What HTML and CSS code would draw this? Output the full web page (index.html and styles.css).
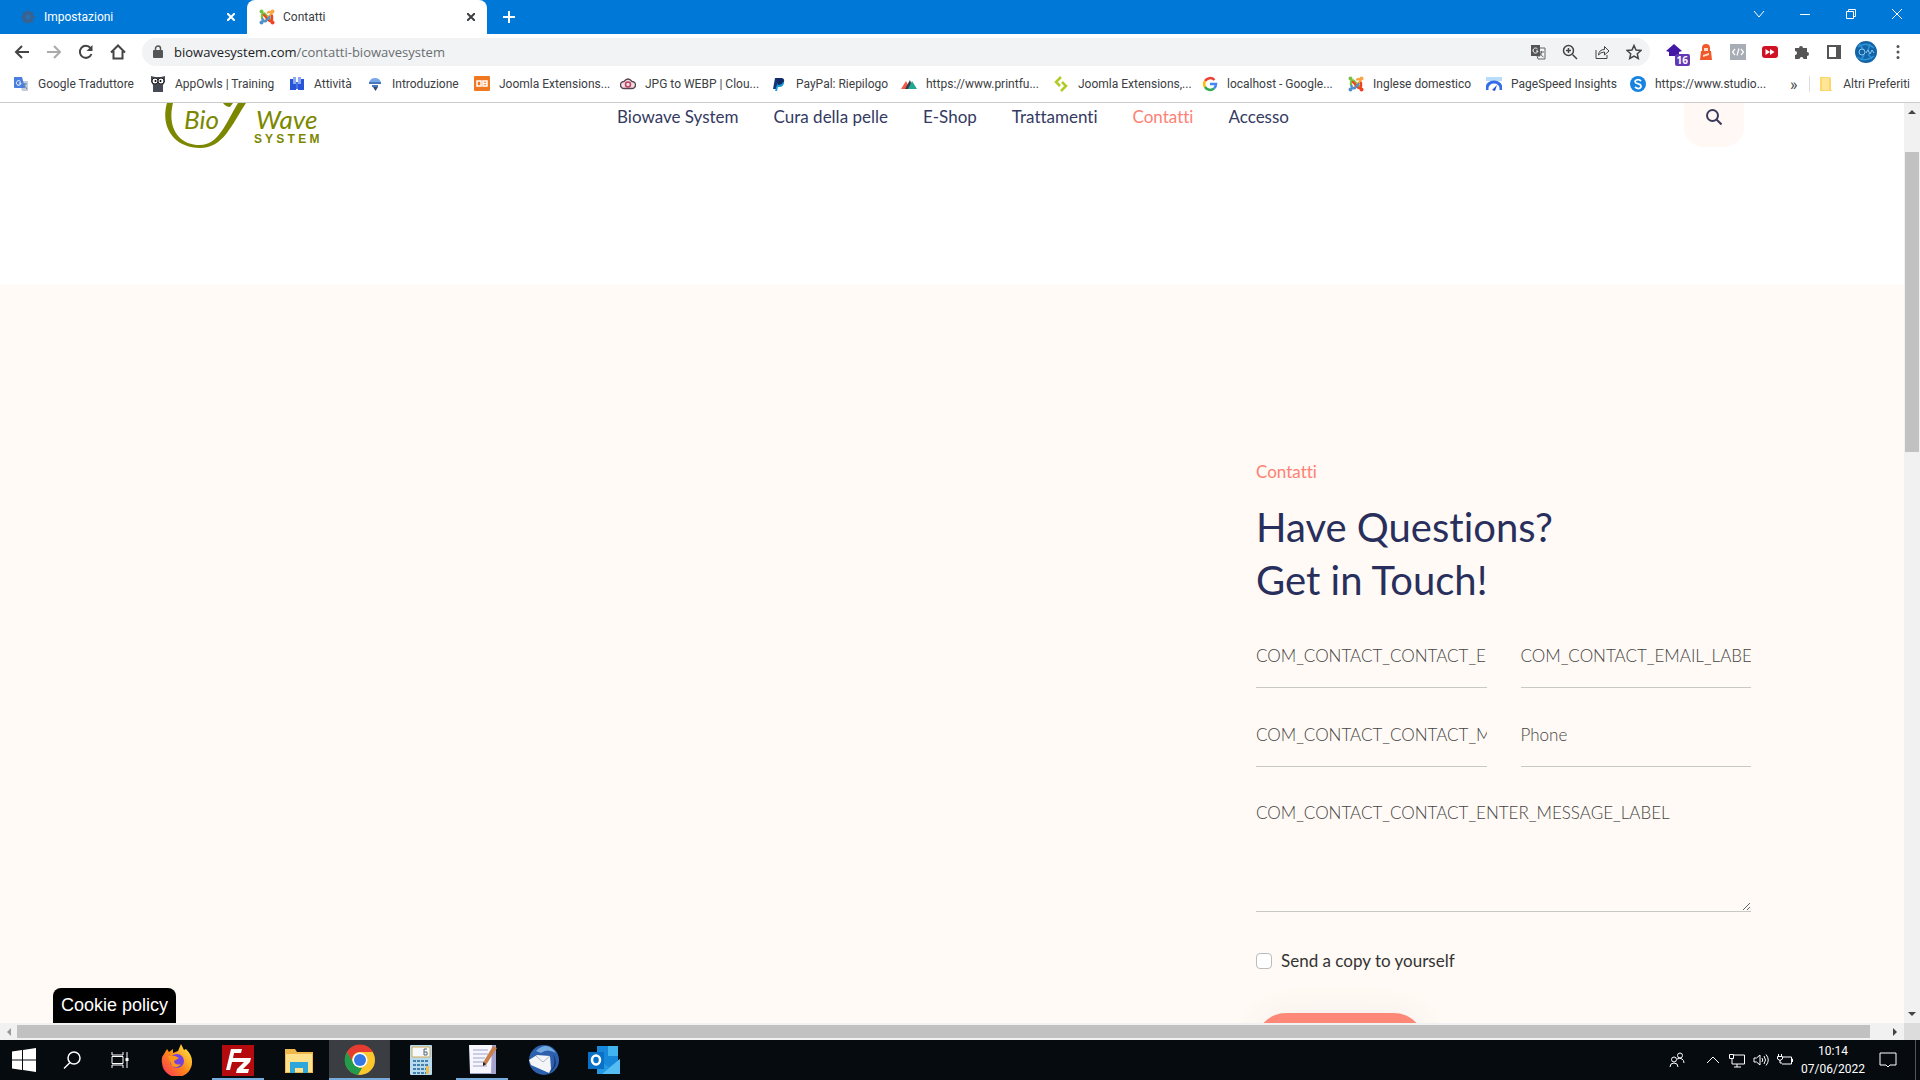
FILE: index.html
```html
<!DOCTYPE html>
<html lang="it">

<head>
    <meta charset="UTF-8">
    <meta name="viewport" content="width=device-width, initial-scale=1.0">
    <title>Contatti</title>
    <link rel="stylesheet" href="styles.css">
</head>

<body>
    <svg class="symbols" aria-hidden="true">
        <symbol id="joomla" viewBox="0 0 16 16">
            <g fill="none" stroke-width="2.4" stroke-linecap="round">
                <path d="M3 9V6.500Q3 4 5.500 4.500L11 10" stroke="#7ac143"/>
                <path d="M9 3.500Q12 2 12.500 5L6.500 11" stroke="#f9a541"/>
                <path d="M13 7V10.500Q12 13 10 11.500L5 6" stroke="#f44321"/>
                <path d="M3.500 10Q4 13 7 12L10.500 8" stroke="#5091cd"/>
            </g>
            <circle cx="2.500" cy="2.500" r="2" fill="#7ac143"/>
            <circle cx="13.500" cy="2.500" r="2" fill="#f9a541"/>
            <circle cx="13.500" cy="13.500" r="2" fill="#f44321"/>
            <circle cx="2.500" cy="13.500" r="2" fill="#5091cd"/>
        </symbol>
    </svg>

    <div class="tabs">
        <div class="tab">
            <svg class="icon" viewBox="0 0 16 16"><circle cx="8" cy="8" r="4" fill="none" stroke="#3c618c" stroke-width="3"/><path d="M8 1v14M1 8h14M3 3l10 10M13 3L3 13" stroke="#3c618c" stroke-width="2"/><circle cx="8" cy="8" r="2.500" fill="#2a6fb4"/></svg>
            <span class="tab-title">Impostazioni</span>
            <button class="tab-close" aria-label="Chiudi"><svg viewBox="0 0 8 8"><path d="M0 0l8 8M8 0L0 8"/></svg></button>
        </div>
        <div class="tab active">
            <svg class="icon"><use href="#joomla"/></svg>
            <span class="tab-title">Contatti</span>
            <button class="tab-close" aria-label="Chiudi"><svg viewBox="0 0 8 8"><path d="M0 0l8 8M8 0L0 8"/></svg></button>
        </div>
        <button class="new-tab" aria-label="Nuova scheda"><svg viewBox="0 0 12 12"><path d="M6 0v12M0 6h12"/></svg></button>
        <div class="window-buttons">
            <button aria-label="Cerca schede"><svg viewBox="0 0 12 12"><path d="M1 3l5 6 5-6"/></svg></button>
            <button aria-label="Riduci"><svg viewBox="0 0 12 12"><path d="M1 6.500h10"/></svg></button>
            <button aria-label="Ripristina"><svg viewBox="0 0 12 12"><path d="M1.500 3.500h7v7h-7zM3.500 3.500v-2h7v7h-2"/></svg></button>
            <button aria-label="Chiudi"><svg viewBox="0 0 12 12"><path d="M1 1l10 10M11 1L1 11"/></svg></button>
        </div>
    </div>

    <div class="toolbar">
        <button class="tool" aria-label="Indietro"><svg class="line" viewBox="0 0 16 16"><path d="M15 8H2M8 2L2 8l6 6"/></svg></button>
        <button class="tool off" aria-label="Avanti"><svg class="line" viewBox="0 0 16 16"><path d="M1 8h13M8 2l6 6-6 6"/></svg></button>
        <button class="tool" aria-label="Ricarica"><svg class="line" viewBox="0 0 16 16"><path d="M13.500 10A6 6 0 1 1 12.500 4"/><path d="M14.500 1v6h-6z" fill="#444" stroke="none"/></svg></button>
        <button class="tool" aria-label="Home"><svg class="line" viewBox="0 0 16 16"><path d="M1 8.500L8 1.500l7 7M3.500 7v7.500h9V7"/></svg></button>
        <div class="omnibox">
            <svg class="lock" viewBox="0 0 10 14"><path d="M2.500 6V3.500a2.500 2.500 0 0 1 5 0V6" fill="none" stroke="#555" stroke-width="1.500"/><rect y="5" width="10" height="8" rx="1" fill="#555"/></svg>
            <span class="url">biowavesystem.com<span>/contatti-biowavesystem</span></span>
            <button class="tool" aria-label="Traduci"><svg viewBox="0 0 16 16"><rect x="1" y="1" width="9" height="11" fill="#555"/><path d="M7.500 5A2.500 2.500 0 1 0 8 7H6" fill="none" stroke="#fff"/><path d="M10 4h5v11H8l-1-3" fill="none" stroke="#666"/><path d="M9 8h5M11.500 7v1q0 3-3 5M10 9q1 3 3.500 4" fill="none" stroke="#666"/></svg></button>
            <button class="tool" aria-label="Zoom"><svg class="line" viewBox="0 0 16 16"><circle cx="6.500" cy="6.500" r="5"/><path d="M10.500 10.500l4.500 4.500M6.500 4v5M4 6.500h5"/></svg></button>
            <button class="tool" aria-label="Condividi"><svg class="line thin" viewBox="0 0 16 16"><path d="M2 6v8.500h11V11M4.500 11Q5 5.500 10.500 5.500V2.500L15 7l-4.500 4V8Q6.500 8 4.500 11z"/></svg></button>
            <button class="tool" aria-label="Preferiti"><svg class="line" viewBox="0 0 16 16"><path d="M8 1.500l2 4.500 5 .5-3.700 3.300 1 4.700L8 12l-4.300 2.500 1-4.700L1 6.500 6 6z"/></svg></button>
        </div>
        <button class="tool ext" aria-label="Estensione"><svg viewBox="0 0 16 16"><path d="M8 0l8 7-3 1v4H3V8L0 7z" fill="#4316a5"/></svg><span class="badge">16</span></button>
        <button class="tool" aria-label="Lighthouse"><svg viewBox="0 0 16 16"><path d="M4 4q0-4 4-4t4 4v3h1l1 9H2l1-9h1z" fill="#f0592b"/><path d="M6 4h4v3H6zM5 11l6-2v2l-6 2z" fill="#ffe0c8"/></svg></button>
        <button class="tool" aria-label="Codice"><svg viewBox="0 0 16 16"><rect width="16" height="16" fill="#a6adb5"/><path d="M5 5L2.500 8 5 11M11 5l2.500 3-2.500 3M9 4.500L7 11.500" fill="none" stroke="#fff" stroke-width="1.200"/></svg></button>
        <button class="tool" aria-label="Video"><svg viewBox="0 0 16 16"><rect y="2" width="16" height="12" rx="3" fill="#cf1225"/><path d="M3.500 5l4.500 3-4.500 3zM8 5l4.500 3L8 11z" fill="#fff"/></svg></button>
        <button class="tool" aria-label="Estensioni"><svg viewBox="0 0 16 16"><path d="M1 4h4a2 2 0 1 1 4 0h4v4a2 2 0 1 1 0 4v3H9.500a2 2 0 0 0-4 0H1v-4a2 2 0 0 0 0-4z" fill="#555"/></svg></button>
        <button class="tool" aria-label="Pannello laterale"><svg viewBox="0 0 16 16"><path d="M2 2h12v12H2z" fill="none" stroke="#555" stroke-width="2"/><path d="M10 2h5v12h-5z" fill="#555"/></svg></button>
        <button class="tool" aria-label="Profilo"><svg class="avatar" viewBox="0 0 22 22"><circle cx="11" cy="11" r="11" fill="#1264a8"/><path d="M3 6q8-6 16 1M2 16q8 6 17-1M4 3l4 5M15 3l-2 6M6 19l3-5M17 18l-4-5" fill="none" stroke="#2f93d4" stroke-width="1.500"/><circle cx="7" cy="11" r="3" fill="none" stroke="#8ccaf0"/><path d="M11 12l2-3 2 4 2-4 2 3" fill="none" stroke="#8ccaf0"/></svg></button>
        <button class="tool" aria-label="Menu"><svg viewBox="0 0 16 16" fill="#555"><circle cx="8" cy="2.500" r="1.500"/><circle cx="8" cy="8" r="1.500"/><circle cx="8" cy="13.500" r="1.500"/></svg></button>
    </div>

    <nav class="bookmarks">
        <a href="#"><svg class="icon" viewBox="0 0 16 16"><path d="M6 5h9v10H9z" fill="#c5cdd8"/><path d="M1 1h8l3 11H2q-1 0-1-1z" fill="#4a7fe0"/><path d="M7.500 5.500A2.300 2.300 0 1 0 8 7H6" fill="none" stroke="#fff"/><path d="M10 8h4M12 7q0 4-2 5M11 9l3 4" fill="none" stroke="#5b84b8"/></svg>Google Traduttore</a>
        <a href="#"><svg class="icon" viewBox="0 0 16 16"><path d="M1 0l4 1h6l4-1v6l-2 3v7H3V9L1 6z" fill="#454a55"/><circle cx="5" cy="5" r="3" fill="#fff" stroke="#222"/><circle cx="11" cy="5" r="3" fill="#fff" stroke="#222"/><circle cx="5.500" cy="5" r="1"/><circle cx="10.500" cy="5" r="1"/></svg>AppOwls | Training</a>
        <a href="#"><svg class="icon" viewBox="0 0 16 16"><path d="M1 3h6v11H1zM9 3h6v11H9z" fill="#2854d8"/><path d="M4 1h3v7H4zM9 1h3v7H9z" fill="#8baaf2"/><path d="M7 6h2v7H7z" fill="#4972e4"/></svg>Attività</a>
        <a href="#"><svg class="icon" viewBox="0 0 16 16"><path d="M2 7q1-5 6-5t6 5z" fill="#78a8e8"/><path d="M2 7h12M5 10h6" stroke="#4a77b8" stroke-width="2"/><path d="M6 11h5l-2.500 4z" fill="#344a70"/></svg>Introduzione</a>
        <a href="#"><svg class="icon" viewBox="0 0 16 16"><rect width="16" height="15" rx="1" fill="#f07820"/><path d="M3 5h4v5H3zM9 5h4v5H9zM9 7.500h4" fill="none" stroke="#fff" stroke-width="1.500"/></svg>Joomla Extensions...</a>
        <a href="#"><svg class="icon" viewBox="0 0 16 16"><path d="M4 12.500a3.500 3.500 0 0 1 0-7q4-5 8 0a3.500 3.500 0 0 1 0 7z" fill="#f5dce2" stroke="#554450" stroke-width="1.300"/><circle cx="8" cy="8.500" r="2.500" fill="none" stroke="#b94261" stroke-width="1.500"/></svg>JPG to WEBP | Clou...</a>
        <a href="#"><svg class="icon" viewBox="0 0 16 16"><path d="M4 2h6q4 0 3 4t-5 4H6l-1 3H2z" fill="#17357d"/><path d="M7 6h6q0 5-5 5H7l-1 4H4z" fill="#199bd7"/><path d="M5 2h5q3 1 2 4T7 9z" fill="#112b67"/></svg>PayPal: Riepilogo</a>
        <a href="#"><svg class="icon" viewBox="0 0 16 16"><path d="M0 13l5-8 4 8z" fill="#f15b49"/><path d="M4 13l5-9 3 9z" fill="#333c46"/><path d="M7 13l4-8 5 8z" fill="#20a795"/></svg>https://www.printfu...</a>
        <a href="#"><svg class="icon" viewBox="0 0 16 16"><path d="M8 1L3 6l4 4M8 15l5-5-4-4" fill="none" stroke="#b4ca24" stroke-width="2.500"/></svg>Joomla Extensions,...</a>
        <a href="#"><svg class="icon" viewBox="0 0 16 16" fill="none" stroke-width="2.500"><path d="M12.500 4A6 6 0 0 0 3 5" stroke="#ea4335"/><path d="M3 5a6 6 0 0 0 0 6" stroke="#fbbc05"/><path d="M3 11a6 6 0 0 0 9 1.500" stroke="#34a853"/><path d="M8 8h6q0 3-2 4.500" stroke="#4285f4"/></svg>localhost - Google...</a>
        <a href="#"><svg class="icon"><use href="#joomla"/></svg>Inglese domestico</a>
        <a href="#"><svg class="icon" viewBox="0 0 16 16"><path d="M0 1h16v4H0z" fill="#b9dcfa"/><path d="M1 14V12a7 6 0 0 1 14 0v2" fill="none" stroke="#356ce8" stroke-width="3"/><path d="M6 14l5-5-2 6z" fill="#284fd0"/></svg>PageSpeed Insights</a>
        <a href="#"><svg class="icon" viewBox="0 0 16 16"><circle cx="8" cy="8" r="8" fill="#1683e2"/><path d="M11 5Q9 3 6.500 4T6 7l4 1.500q2 2 0 3.500t-5-1" fill="none" stroke="#fff" stroke-width="1.800"/></svg>https://www.studio...</a>
        <button class="more" aria-label="Altri">»</button>
        <a href="#" class="others"><svg class="icon" viewBox="0 0 16 16"><path d="M2 1h9q2 0 2 2v10l1 2H2z" fill="#fbd66d"/><path d="M4 2h7v12H4z" fill="#ffe596"/></svg>Altri Preferiti</a>
    </nav>

    <div class="viewport">
        <div class="page">
            <header class="header">
                <a href="#" class="logo" aria-label="Bio Wave System">
                    <svg viewBox="0 0 168 46">
                        <path d="M3 0C-4 24 10 45 36 45C59 45 67 23 82 0H74C61 22 54 42 36 42C14 42 3 24 9 0z" fill="#7c8700"/>
                        <path d="M59 0h10l-3 4q-4 0-7-4z" fill="#7c8700"/>
                        <text x="20" y="26" class="logo-script">Bio</text>
                        <text x="92" y="26" class="logo-script">Wave</text>
                        <text x="90" y="40" class="logo-system">S Y S T E M</text>
                    </svg>
                </a>
                <nav class="menu">
                    <a href="#">Biowave System</a>
                    <a href="#">Cura della pelle</a>
                    <a href="#">E-Shop</a>
                    <a href="#">Trattamenti</a>
                    <a href="#" class="current">Contatti</a>
                    <a href="#">Accesso</a>
                </nav>
                <button class="search" aria-label="Cerca"><svg viewBox="0 0 16 16"><circle cx="6.500" cy="6.500" r="5.500"/><path d="M10.500 10.500l5 5"/></svg></button>
            </header>

            <main class="contact">
                <form class="contact-form">
                    <p class="subtitle">Contatti</p>
                    <h2>Have Questions?<br>Get in Touch!</h2>
                    <div class="fields">
                        <input type="text" aria-label="Name" placeholder="COM_CONTACT_CONTACT_ENTER_NAME_LABEL">
                        <input type="email" aria-label="Email" placeholder="COM_CONTACT_EMAIL_LABEL">
                        <input type="text" aria-label="Subject" placeholder="COM_CONTACT_CONTACT_MESSAGE_SUBJECT_LABEL">
                        <input type="tel" aria-label="Phone" placeholder="Phone">
                        <textarea aria-label="Message" placeholder="COM_CONTACT_CONTACT_ENTER_MESSAGE_LABEL"></textarea>
                    </div>
                    <div class="copy">
                        <input type="checkbox" id="copy">
                        <label for="copy">Send a copy to yourself</label>
                    </div>
                    <button class="send" type="button" aria-label="Send"></button>
                </form>
            </main>
            <button class="cookie">Cookie policy</button>
        </div>
        <div class="scroll-y">
            <svg viewBox="0 0 8 5"><path d="M0 5l4-4 4 4z"/></svg>
            <div class="thumb-y"></div>
            <svg viewBox="0 0 8 5"><path d="M0 0l4 4 4-4z"/></svg>
        </div>
        <div class="scroll-x">
            <svg viewBox="0 0 5 8" class="dim"><path d="M5 0L1 4l4 4z"/></svg>
            <div class="thumb-x"></div>
            <svg viewBox="0 0 5 8"><path d="M0 0l4 4-4 4z"/></svg>
        </div>
        <div class="corner"></div>
    </div>

    <footer class="taskbar">
        <button class="system" aria-label="Start"><svg viewBox="0 0 24 24" fill="#fff"><path d="M0 3.500l10-1.500v9.500H0zM11 2l13-2v11.500H11zM0 12.500h10V22L0 20.500zM11 12.500h13V24l-13-2z"/></svg></button>
        <button class="system" aria-label="Cerca"><svg viewBox="0 0 24 24" class="white"><circle cx="14" cy="10" r="6"/><path d="M10 14.500l-6 6"/></svg></button>
        <button class="system" aria-label="Attività"><svg viewBox="0 0 24 24" class="white thin"><path d="M4 4v3h11V4M4 20v-3h11v3M4 8.500h11v7H4zM19 4v5M19 14v6"/><path d="M18 10h2v3h-2z" fill="#fff"/></svg></button>
        <div class="apps">
            <button class="app" aria-label="Firefox"><svg viewBox="0 0 32 32"><defs><linearGradient id="fox" x1="1" y1="0" x2="0" y2="1"><stop stop-color="#fff44f"/><stop offset=".5" stop-color="#ff8a16"/><stop offset="1" stop-color="#ff2a62"/></linearGradient></defs><path d="M3 10l3-5 2 3 4-3v4l5-2 3-7 3 6 2-1q6 6 6 12a15 15 0 0 1-30 2Q0 13 3 10z" fill="url(#fox)"/><circle cx="16" cy="17" r="7" fill="#7543dc"/><path d="M7 12h7l4 2-5 3q1 5 7 3-3 5-9 2z" fill="#ff9818"/></svg></button>
            <button class="app open" aria-label="FileZilla"><svg viewBox="0 0 32 32"><path d="M0 1h32v31H0z" fill="#b50b0e"/><path d="M9 5h11l-1 4h-7l-1 5h6l-1 4h-6l-2 8H4zM17 14h12l-1 4-7 7h6l-1 4H14l1-4 7-7h-6z" fill="#fff"/></svg></button>
            <button class="app" aria-label="Esplora file"><svg viewBox="0 0 32 32"><path d="M2 5h10l2 3h16v21H2z" fill="#eeb84b"/><path d="M3 10h26v18H3z" fill="#ffe08b"/><path d="M7 29V18h18v11h-5v-5h-8v5z" fill="#2da6dc"/></svg></button>
            <button class="app open selected" aria-label="Chrome"><svg viewBox="0 0 32 32"><circle cx="16" cy="16" r="15" fill="#fbc52e"/><path d="M3 8a15 15 0 0 1 26 0H16a8 8 0 0 0-7 12z" fill="#e63b31"/><path d="M3 8l7 12q3 4 8 4l-4 7A15 15 0 0 1 3 8z" fill="#249b4a"/><circle cx="16" cy="16" r="7.500" fill="#fff"/><circle cx="16" cy="16" r="6" fill="#3578e5"/></svg></button>
            <button class="app" aria-label="Calcolatrice"><svg viewBox="0 0 32 32"><rect x="5" y="1" width="22" height="30" rx="1" fill="#b7dbef"/><path d="M7 3h18v10H7z" fill="#f5f9fb" stroke="#d7a850"/><path d="M22 5h-3v6h3V8h-3" fill="none" stroke="#567"/><path d="M8 17h16M8 21h16M8 25h16M8 29h16" stroke="#487fa9" stroke-width="2" stroke-dasharray="3 1"/><path d="M21 22h3v8h-3z" fill="#edbd52"/></svg></button>
            <button class="app open" aria-label="Note"><svg viewBox="0 0 32 32"><path d="M4 1h26v29H4z" fill="#a5a4d0"/><path d="M3 1h23l-1 28H4z" fill="#f7f6ff"/><path d="M7 6h15M7 10h15M7 14h12M7 18h11M7 22h14" stroke="#a0a3ca"/><path d="M27 2l4 2-11 17-3 1 1-5z" fill="#c7814c"/><path d="M17 18l3 2-3 2z" fill="#222"/></svg></button>
            <button class="app" aria-label="Thunderbird"><svg viewBox="0 0 32 32"><circle cx="17" cy="16" r="15" fill="#2d61ad"/><path d="M9 7Q20-4 29 9q-9-5-15 0z" fill="#75abdf"/><path d="M18 31q13-7 8-21 9 13-8 21z" fill="#163b7c"/><path d="M2 16l8-5 13 1 1 13-2 4-18-8z" fill="#f4f5f7"/><path d="M9 12l7 6 7-6" fill="none" stroke="#aeb6c8"/></svg></button>
            <button class="app" aria-label="Outlook"><svg viewBox="0 0 32 32"><path d="M9 2h21v27H9z" fill="#1687d9"/><path d="M20 2h10v10H20z" fill="#41b4ef"/><path d="M9 15l12 8 11-8v15H9z" fill="#2598e3"/><path d="M32 15v15H14z" fill="#55bdf2"/><path d="M0 8h16v17H0z" fill="#0870c7"/><ellipse cx="8" cy="16" rx="4" ry="4.500" fill="none" stroke="#fff" stroke-width="2.500"/></svg></button>
        </div>
        <div class="tray">
            <svg class="white people" viewBox="0 0 16 16"><circle cx="11" cy="3.500" r="2.500"/><circle cx="5" cy="7.500" r="2.500"/><path d="M1 15q0-4 4-4t4 4M8 7q3-1.500 5 0 2 1 2 4"/></svg>
            <svg class="white" viewBox="0 0 16 16"><path d="M2 11l6-6 6 6"/></svg>
            <svg class="white" viewBox="0 0 16 16"><path d="M4 3h11.500v9H3V7M8 12v3M5 15h7M.5 2.500h4v4h-4z"/></svg>
            <svg class="white" viewBox="0 0 16 16"><path d="M1 6h2.500L7 3v10L3.500 10H1zM9 6q1.500 2 0 4M11 4q3 4 0 8M13 2.500q4.500 5.500 0 11"/></svg>
            <svg class="white" viewBox="0 0 16 16"><path d="M6 5h8.500v7H5M14.500 7h1v3M1.500 2v2M4.500 2v2M.5 4.500h5V7Q3 10 .5 7zM3 8v3h2"/></svg>
            <div class="clock">10:14<br>07/06/2022</div>
            <svg class="white notes" viewBox="0 0 18 18"><path d="M1 2h16v12h-6l-2 2-2-2H1z"/></svg>
            <div class="desktop"></div>
        </div>
    </footer>
</body>

</html>
```

FILE: styles.css
```css
*{
    margin: 0;
    padding: 0;
    box-sizing: border-box;
}
body{
    height: 100vh;
    display: flex;
    flex-direction: column;
    overflow: hidden;
    font-family: "Open Sans", sans-serif;
    font-size: 12px;
    color: #3c4043;
    background-color: white;
}
button{
    border: none;
    background: none;
    font: inherit;
    color: inherit;
}
a{
    color: inherit;
    text-decoration: none;
}
svg{
    display: block;
    flex-shrink: 0;
}
.symbols{
    position: absolute;
    width: 0;
    height: 0;
}
.icon{
    width: 16px;
    height: 16px;
}

/* browser tabs */
.tabs{
    height: 34px;
    display: flex;
    background-color: #0078d7;
    color: white;
    font-family: Roboto, sans-serif;
}
.tab{
    width: 240px;
    display: flex;
    align-items: center;
    gap: 8px;
    padding: 0 12px;
}
.tab:first-child{
    width: 247px;
    padding-left: 20px;
}
.tab.active{
    background-color: white;
    color: #3c4043;
    border-radius: 8px 8px 0 0;
}
.tab-title{
    flex: 1;
}
.tab-close{
    width: 8px;
    height: 8px;
}
.tabs svg{
    fill: none;
    stroke: currentColor;
}
.tabs .icon{
    stroke: none;
}
.tab-close svg{
    width: 8px;
    height: 8px;
    stroke-width: 2;
}
.new-tab{
    width: 44px;
    display: flex;
    align-items: center;
    justify-content: center;
}
.new-tab svg{
    width: 12px;
    height: 12px;
    stroke-width: 2;
}
.window-buttons{
    display: flex;
    height: 28px;
    margin-left: auto;
}
.window-buttons button{
    width: 46px;
    display: flex;
    align-items: center;
    justify-content: center;
}
.window-buttons svg{
    width: 12px;
    height: 12px;
}

/* address bar */
.toolbar{
    height: 36px;
    display: flex;
    align-items: center;
    padding: 0 6px;
}
.tool{
    width: 32px;
    height: 28px;
    display: flex;
    align-items: center;
    justify-content: center;
}
.tool svg{
    width: 16px;
    height: 16px;
}
.tool .avatar{
    width: 22px;
    height: 22px;
}
.line{
    fill: none;
    stroke: #444;
    stroke-width: 2;
}
.omnibox .line{
    stroke-width: 1.5;
}
.omnibox .line.thin{
    stroke-width: 1;
}
.off .line{
    stroke: #aaa;
}
.omnibox{
    flex: 1;
    height: 28px;
    display: flex;
    align-items: center;
    margin: 0 8px;
    padding-left: 11px;
    border-radius: 14px;
    background-color: #f1f3f4;
}
.lock{
    width: 10px;
    height: 14px;
}
.url{
    flex: 1;
    padding-left: 11px;
    font-size: 13px;
    color: #202124;
}
.url span{
    color: #6a6e72;
}
.ext{
    position: relative;
}
.badge{
    position: absolute;
    right: 0;
    bottom: 0;
    padding: 0 2px;
    border-radius: 2px;
    background-color: #6238b5;
    color: white;
    font-size: 10px;
    font-weight: 700;
    line-height: 12px;
}

/* bookmarks */
.bookmarks{
    height: 33px;
    display: grid;
    grid-template-columns: 137px 139px 78px 107px 146px 151px 130px 152px 149px 146px 138px 144px 130px 1fr auto;
    align-items: center;
    padding: 0 10px 4px 13px;
    border-bottom: 1px solid #ccc;
    font-family: Roboto, sans-serif;
    white-space: nowrap;
}
.bookmarks a{
    display: flex;
    align-items: center;
    gap: 9px;
}
.more{
    padding-left: 18px;
    font-size: 16px;
}
.bookmarks .others{
    padding-left: 8px;
    border-left: 1px solid #ddd;
}

/* page and scrollbars */
.viewport{
    flex: 1;
    min-height: 0;
    display: grid;
    grid-template-columns: 1fr 16px;
    grid-template-rows: 1fr 17px;
}
.page{
    position: relative;
    min-height: 0;
    overflow: hidden;
    background-color: #fffaf5;
    font-family: Lato, sans-serif;
    font-size: 17px;
    font-variant-ligatures: none;
    line-height: 26px;
}
.scroll-y{
    display: flex;
    flex-direction: column;
    align-items: center;
    padding: 6px 0;
    background-color: #f1f1f1;
}
.scroll-y svg{
    width: 8px;
    height: 5px;
    fill: #444;
}
.thumb-y{
    width: 14px;
    height: 33%;
    margin: 38px 0 auto;
    background-color: #c1c1c1;
}
.scroll-x{
    display: flex;
    align-items: center;
    padding: 0 6px;
    background-color: #f1f1f1;
}
.scroll-x svg{
    width: 5px;
    height: 8px;
    fill: #444;
}
.scroll-x .dim{
    fill: #999;
}
.thumb-x{
    flex: 1;
    height: 13px;
    margin: 0 23px 0 6px;
    background-color: #c1c1c1;
}
.corner{
    background-color: #dcdcdc;
}

/* site header */
.header{
    height: 182px;
    display: grid;
    grid-template-columns: 453px 1fr 60px;
    align-items: start;
    padding: 0 160px 0 164px;
    background-color: white;
}
.logo svg{
    width: 168px;
    height: 46px;
    fill: #7c8700;
}
.logo-script{
    font-family: Lato, sans-serif;
    font-size: 26px;
    font-style: italic;
}
.logo-system{
    font-family: "Liberation Sans", sans-serif;
    font-size: 12px;
    font-weight: 700;
}
.menu{
    display: flex;
    gap: 35px;
    padding-top: 1px;
    color: #343a62;
}
.menu .current{
    color: #fe8173;
}
.search{
    height: 44px;
    display: flex;
    justify-content: center;
    padding-top: 6px;
    border-radius: 0 0 20px 20px;
    background-color: #fff8f5;
}
.search svg{
    width: 16px;
    height: 16px;
    fill: none;
    stroke: #3b3b5c;
    stroke-width: 2;
}

/* contact form */
.contact{
    display: flex;
    justify-content: flex-end;
    padding: 174px 153px 0 0;
}
.contact-form{
    width: 495px;
}
.subtitle{
    color: #fe8173;
}
h2{
    margin-top: 16px;
    font-size: 40px;
    font-weight: 400;
    line-height: 53px;
    color: #292f5c;
}
.fields{
    display: grid;
    grid-template-columns: 1fr 1fr;
    gap: 24px 34px;
    margin-top: 26px;
}
.fields input, .fields textarea{
    width: 100%;
    height: 55px;
    border: none;
    border-bottom: 1px solid #c8c8c5;
    background: none;
    font: inherit;
    font-weight: 300;
    padding-bottom: 10px;
    outline: none;
}
.fields textarea{
    grid-column: span 2;
    height: 121px;
    padding-top: 9px;
}
.fields ::placeholder{
    color: #444;
}
.copy{
    display: flex;
    align-items: center;
    gap: 9px;
    margin-top: 36px;
    color: #333;
}
.copy input{
    width: 16px;
    height: 16px;
    appearance: none;
    border: 1px solid #bbb;
    border-radius: 4px;
    background-color: white;
}
.send{
    display: block;
    width: 168px;
    height: 60px;
    margin-top: 39px;
    border-radius: 30px;
    background-color: #fe8878;
    box-shadow: 0 0 30px #f5eeea;
}
.cookie{
    position: absolute;
    left: 53px;
    bottom: 0;
    height: 35px;
    padding: 0 8px 2px;
    border-radius: 8px 8px 0 0;
    background-color: black;
    color: white;
    font-family: "Liberation Sans", sans-serif;
    font-size: 18px;
}

/* taskbar */
.taskbar{
    height: 40px;
    display: flex;
    background-color: #060b10;
    color: white;
}
.system{
    width: 48px;
    display: flex;
    align-items: center;
    justify-content: center;
}
.system svg{
    width: 24px;
    height: 24px;
}
.white{
    fill: none;
    stroke: white;
    stroke-width: 1.5;
}
.white.thin{
    stroke-width: 1;
}
.apps{
    display: flex;
    margin-left: 2px;
}
.app{
    width: 61px;
    display: flex;
    align-items: center;
    justify-content: center;
}
.app svg{
    width: 32px;
    height: 32px;
}
.app.open{
    background: linear-gradient(#76abdc, #76abdc) bottom / 52px 2px no-repeat;
}
.app.selected{
    background-color: #3a3d41;
    background-size: 100% 2px;
}
.tray{
    display: flex;
    align-items: center;
    gap: 8px;
    margin-left: auto;
}
.tray svg{
    width: 16px;
    height: 16px;
    stroke-width: 1;
}
.tray .people{
    margin-right: 12px;
}
.clock{
    width: 64px;
    font-family: Roboto, sans-serif;
    line-height: 18px;
    text-align: center;
}
.tray .notes{
    width: 18px;
    height: 18px;
    margin: 0 10px 0 6px;
}
.desktop{
    width: 5px;
    height: 40px;
    border-left: 1px solid #555;
}
```
